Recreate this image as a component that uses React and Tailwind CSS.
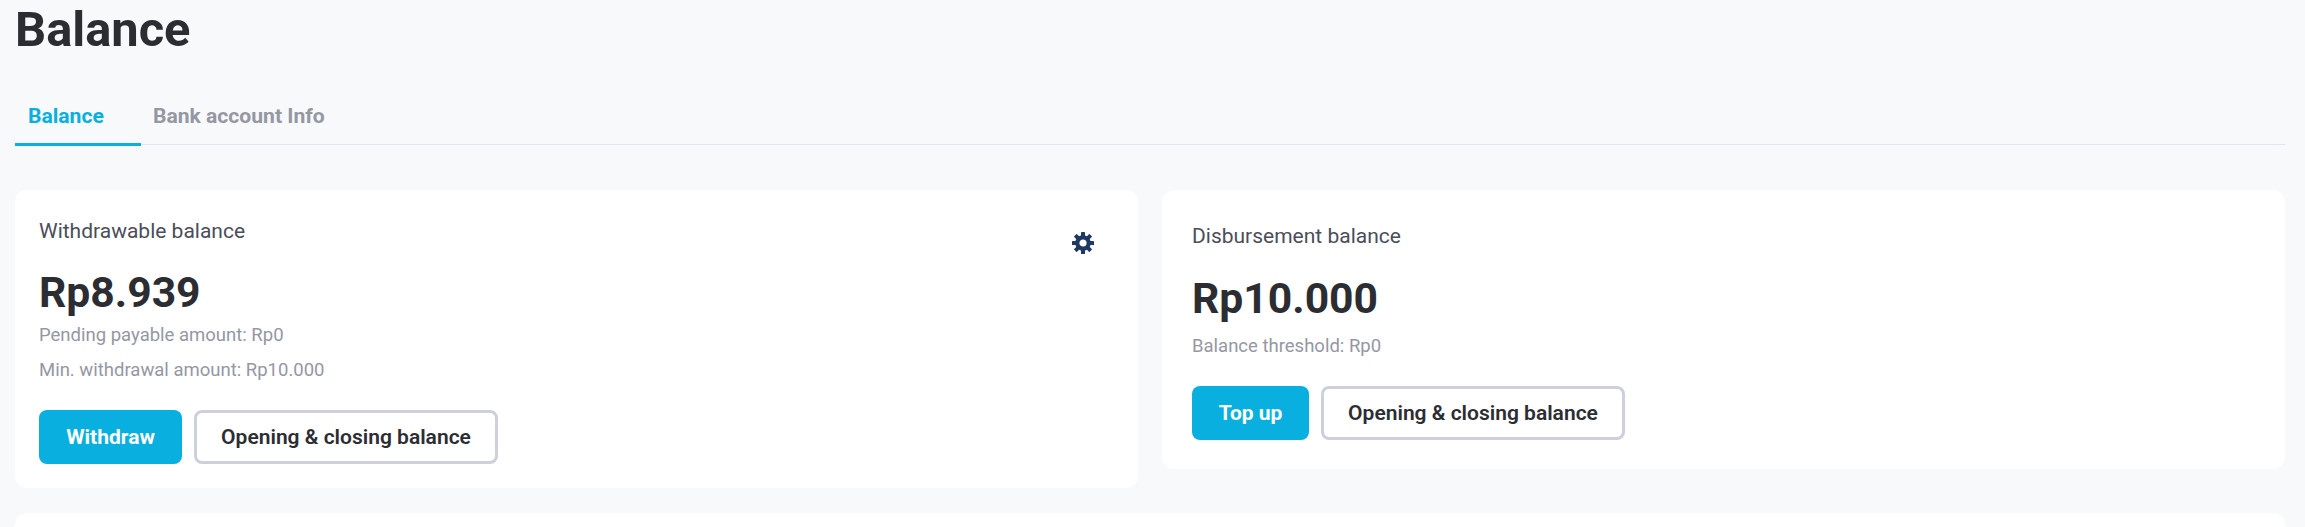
import React from "react";

const font = { fontFamily: "Roboto, sans-serif" };

function Gear() {
  return (
    <svg
      viewBox="0 0 22 22"
      className="absolute right-[44px] top-[42px] h-[22px] w-[22px] text-[#1f3864]"
      fill="none"
    >
      <circle cx="11" cy="11" r="5.7" stroke="currentColor" strokeWidth="4.2" />
      {[0, 45, 90, 135, 180, 225, 270, 315].map((a) => (
        <rect key={a} x="9" y="0" width="4" height="5" rx="0.6" fill="currentColor" transform={`rotate(${a} 11 11)`} />
      ))}
    </svg>
  );
}

function Primary({ children, w }) {
  return (
    <button className={`${w} h-[54px] rounded-lg bg-[#08afdf] text-[21px] leading-none font-bold text-white`}>
      {children}
    </button>
  );
}

function Outline() {
  return (
    <button className="w-[304px] h-[54px] rounded-lg border-[3px] border-[#cdd0da] bg-white text-[21px] leading-none font-semibold text-[#2c2d33]">
      Opening &amp; closing balance
    </button>
  );
}

export default function App() {
  return (
    <div className="h-[527px] overflow-hidden bg-[#f8f9fb] pl-[15px] pr-[20px]" style={font}>
      <h1 className="pt-[2px] text-[48.8px] leading-[56px] font-bold text-[#2c2d33]">Balance</h1>

      <div className="mt-[31px] flex h-[56px] border-b border-[#dfe7f3]">
        <div className="h-[57px] w-[126px] border-b-[3px] border-[#08afdf] pl-[13px] pt-[13px] text-[21.1px] leading-[28px] font-bold text-[#08afdf]">
          Balance
        </div>
        <div className="pl-[12px] pt-[13px] text-[21.1px] leading-[28px] font-bold text-[#9597a3]">
          Bank account Info
        </div>
      </div>

      <div className="mt-[45px] grid grid-cols-2 items-start gap-6">
        <div className="relative rounded-xl bg-white px-6 pt-[27px] pb-6">
          <div className="text-[21px] leading-[28px] text-[#4b4d59]">Withdrawable balance</div>
          <div className="mt-[22px] text-[42.67px] leading-[50px] font-bold text-[#2c2d33]">Rp8.939</div>
          <div className="mt-[6px] text-[18.5px] leading-[24px] text-[#9597a3]">Pending payable amount: Rp0</div>
          <div className="mt-[11px] text-[18.5px] leading-[24px] text-[#9597a3]">Min. withdrawal amount: Rp10.000</div>
          <div className="mt-[28px] flex gap-3">
            <Primary w="w-[143px]">Withdraw</Primary>
            <Outline />
          </div>
          <Gear />
        </div>

        <div className="rounded-xl bg-white px-[30px] pt-[32px] pb-[29px]">
          <div className="text-[21px] leading-[28px] text-[#4b4d59]">Disbursement balance</div>
          <div className="mt-[23px] text-[42.67px] leading-[50px] font-bold text-[#2c2d33]">Rp10.000</div>
          <div className="mt-[11px] text-[18.5px] leading-[24px] text-[#9597a3]">Balance threshold: Rp0</div>
          <div className="mt-[28px] flex gap-3">
            <Primary w="w-[117px]">Top up</Primary>
            <Outline />
          </div>
        </div>
      </div>

      <div className="mt-[25px] h-[40px] rounded-xl bg-white" />
    </div>
  );
}
